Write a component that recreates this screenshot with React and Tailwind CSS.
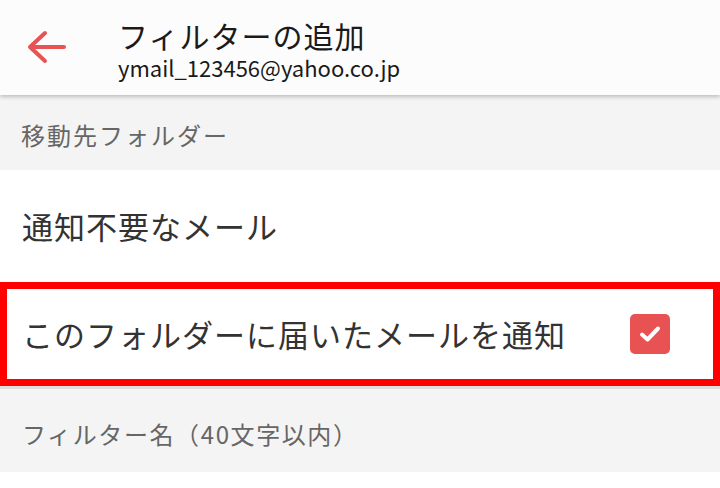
import React from "react";

const jp = { fontFamily: '"Noto Sans CJK JP", "Noto Sans", sans-serif' };

function BackArrow() {
  return (
    <svg width="40" height="34" viewBox="0 0 40 34" fill="none">
      <path
        d="M3 17H37M18 3L3 17L18 31"
        stroke="#e85353"
        strokeWidth="4"
        strokeLinecap="round"
        strokeLinejoin="round"
      />
    </svg>
  );
}

function Check() {
  return (
    <div className="w-[40px] h-[40px] rounded-[5px] bg-[#e85253] flex items-center justify-center">
      <svg width="24" height="20" viewBox="0 0 24 20" fill="none">
        <path
          d="M4 10.5L9.5 15.5L20 4.5"
          stroke="#fff"
          strokeWidth="4"
          strokeLinecap="round"
          strokeLinejoin="round"
        />
      </svg>
    </div>
  );
}

export default function App() {
  return (
    <div className="w-[720px] h-[488px] bg-white overflow-hidden" style={jp}>
      {/* header */}
      <div className="relative z-10 h-[95px] bg-[#fcfcfc] flex shadow-[0_2px_4px_rgba(0,0,0,0.22)]">
        <div className="w-[118px] flex items-start pt-[30px] pl-[27px]">
          <BackArrow />
        </div>
        <div className="flex flex-col pt-[18px] gap-[2px]">
          <div className="text-[30px] leading-[34px] tracking-[1px] text-[#1a1a1a]">フィルターの追加</div>
          <div className="text-[22px] leading-[26px] text-[#1a1a1a]">ymail_123456@yahoo.co.jp</div>
        </div>
      </div>

      {/* move-to folder */}
      <div className="h-[75px] bg-[#f4f4f4] flex items-center px-[21px] pt-[4px]">
        <span className="text-[24px] tracking-[2px] text-[#666]">移動先フォルダー</span>
      </div>

      <div className="h-[112px] flex items-center px-[22px]">
        <span className="text-[31px] tracking-[1px] text-[#333]">通知不要なメール</span>
      </div>

      <div className="h-[104px] border-[7px] border-[#ff0000] flex items-center justify-between pl-[15px] pr-[43px]">
        <span className="text-[31px] tracking-[1px] text-[#333]">このフォルダーに届いたメールを通知</span>
        <Check />
      </div>
      <div className="h-[3px] bg-[#dedede]" />

      {/* filter name */}
      <div className="h-[83px] bg-[#f4f4f4] flex items-center px-[22px] pt-[6px]">
        <span className="text-[24px] tracking-[1.6px] text-[#666]">フィルター名（40文字以内）</span>
      </div>
    </div>
  );
}
